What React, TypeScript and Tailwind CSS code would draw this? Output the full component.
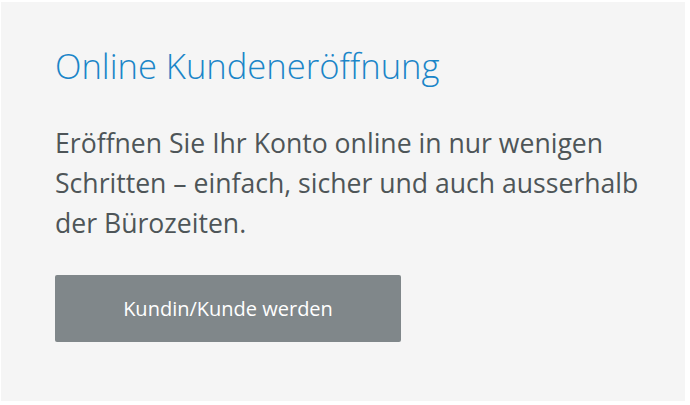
import React from 'react';

export default function App() {
  return (
    <div className="w-[690px] h-[405px] bg-white pt-[2px] pl-[1px]">
      <div
        className="w-[684px] h-[399px] bg-[#f5f5f5] pl-[54px] pt-[40px]"
        style={{ fontFamily: '"Open Sans", sans-serif' }}
      >
        <h1 className="text-[34.6px] leading-[48px] font-light text-[#1a85c8]">Online Kundeneröffnung</h1>
        <p className="mt-[33px] w-[610px] text-[26.6px] leading-[40px] text-[#4e5558]">
          Eröffnen Sie Ihr Konto online in nur wenigen Schritten – einfach, sicher und auch ausserhalb der Bürozeiten.
        </p>
        <button className="mt-[32px] w-[346px] h-[67px] rounded-[2px] bg-[#80878a] text-white text-[20px]">
          Kundin/Kunde werden
        </button>
      </div>
    </div>
  );
}
